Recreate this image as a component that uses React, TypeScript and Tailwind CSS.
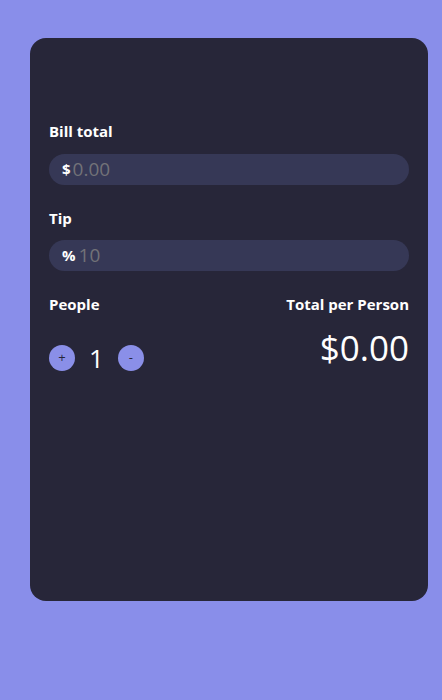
export default function App() {
  return (
    <div className="min-h-[700px] w-full bg-[#898eea] pt-[38px] pl-[30px] pr-[14px]" style={{ fontFamily: '"Open Sans", sans-serif' }}>
      <div className="h-[563px] w-[398px] rounded-2xl bg-[#272639] px-[19px] pt-[83px] text-white">
        <label className="block text-[15px] font-bold leading-5">Bill total</label>
        <div className="mt-[13px] flex h-[31px] items-center rounded-full bg-[#363856] px-[13px]">
          <span className="text-[15px] font-bold">$</span>
          <input
            className="ml-[2px] w-full bg-transparent text-[19px] text-white outline-none placeholder:text-[#727278]"
            placeholder="0.00"
          />
        </div>
        <label className="mt-[23px] block text-[15px] font-bold leading-5">Tip</label>
        <div className="mt-[12px] flex h-[31px] items-center rounded-full bg-[#363856] px-[13px]">
          <span className="text-[15px] font-bold">%</span>
          <input
            className="ml-[3px] w-full bg-transparent text-[19px] text-white outline-none placeholder:text-[#727278]"
            placeholder="10"
          />
        </div>
        <div className="mt-[23px] flex justify-between">
          <div>
            <div className="text-[15px] font-bold leading-5">People</div>
            <div className="mt-[28px] flex items-center">
              <button className="flex h-[26px] w-[26px] items-center justify-center rounded-full bg-[#8a8fe8] text-[13px] text-[#272639]">+</button>
              <span className="mx-[14px] text-[26px] leading-8">1</span>
              <button className="flex h-[26px] w-[26px] items-center justify-center rounded-full bg-[#8a8fe8] text-[13px] text-[#272639]">-</button>
            </div>
          </div>
          <div className="text-right">
            <div className="text-[15px] font-bold leading-5">Total per Person</div>
            <div className="mt-[14px] text-[35px] leading-10">$0.00</div>
          </div>
        </div>
      </div>
    </div>
  );
}
